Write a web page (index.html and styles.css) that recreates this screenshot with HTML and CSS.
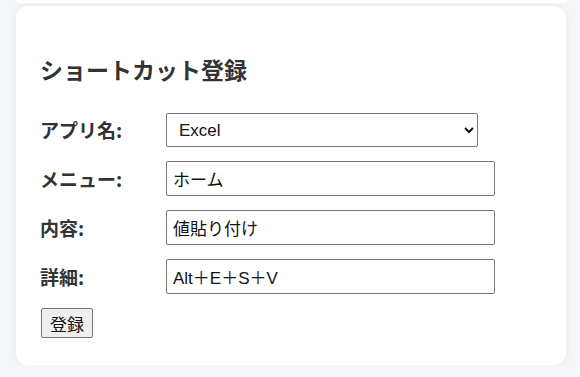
FILE: index.html
```html
<!DOCTYPE html>
<html lang="ja">
<head>
  <meta charset="UTF-8" />
  <title>ショートカット登録</title>
  <link rel="stylesheet" href="styles.css">
</head>
<body>
  <div class="card prev"></div>

  <div class="card">
    <h2>ショートカット登録</h2>
    <form class="form">
      <div class="row">
        <label for="app">アプリ名:</label>
        <select id="app" class="field select">
          <option>Excel</option>
          <option>Word</option>
          <option>PowerPoint</option>
        </select>
      </div>
      <div class="row">
        <label for="menu">メニュー:</label>
        <input type="text" id="menu" class="field" value="ホーム" />
      </div>
      <div class="row">
        <label for="naiyou">内容:</label>
        <input type="text" id="naiyou" class="field" value="値貼り付け" />
      </div>
      <div class="row">
        <label for="shousai">詳細:</label>
        <input type="text" id="shousai" class="field" value="Alt＋E＋S＋V" />
      </div>
      <button type="button" class="btn">登録</button>
    </form>
  </div>
</body>
</html>
```

FILE: styles.css
```css
body {
  margin: 0;
  padding: 0 14px 0 16px;
  background-color: #f5f6f8;
  font-family: "Noto Sans CJK JP", "Liberation Sans", sans-serif;
  color: #333;
}

.card {
  background-color: #fff;
  border-radius: 12px;
  box-shadow: 0 2px 8px rgba(0,0,0,0.06);
  padding: 1px 24px 27px;
}

.card.prev {
  height: 3px;
  padding: 0;
  margin-bottom: 3px;
  border-radius: 0 0 12px 12px;
}

h2 {
  font-size: 23px;
  font-weight: bold;
  margin: 47px 0 29px;
  line-height: 30px;
}

.row {
  display: flex;
  align-items: center;
  margin-bottom: 14px;
}

.row label {
  width: 126px;
  font-size: 19px;
  font-weight: bold;
  line-height: 24px;
}

.field {
  box-sizing: border-box;
  width: 329px;
  height: 35px;
  padding: 0 6px;
  font-family: "Liberation Sans", "Noto Sans CJK JP", sans-serif;
  font-size: 17px;
  color: #111;
  border: 1px solid #767676;
  border-radius: 2px;
  background: #fff;
}

.select {
  width: 312px;
  height: 34px;
  padding-left: 8px;
}

.btn {
  margin-left: 1px;
  height: 30px;
  padding: 0 8px;
  font-family: "Noto Sans CJK JP", sans-serif;
  font-size: 17px;
  color: #111;
  background: #efefef;
  border: 1px solid #767676;
  border-radius: 2px;
}
```
